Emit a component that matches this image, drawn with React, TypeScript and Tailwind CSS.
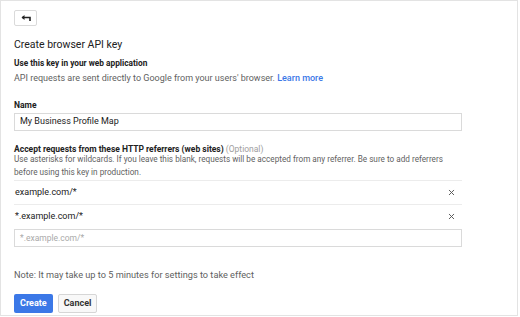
import { X } from "lucide-react";

const referrers = ["example.com/*", "*.example.com/*"];

function BackButton() {
  return (
    <button className="flex h-[16px] w-[23px] items-center justify-center rounded-[2px] border border-[#dadada] bg-white">
      <svg width="10" height="7" viewBox="0 0 10 7" fill="none">
        <path d="M1 2.5 L9 2.5 L9 6" stroke="#222" strokeWidth="1.6" />
        <path d="M0.5 2.5 L3.5 0 L3.5 5 Z" fill="#222" />
      </svg>
    </button>
  );
}

export default function App() {
  return (
    <div
      className="h-[317px] w-[520px] bg-white text-[#212121]"
      style={{ fontFamily: "Roboto, 'Liberation Sans', sans-serif" }}
    >
      <div className="h-[316px] w-[518px] border border-[#e3e3e3] pl-[13px] pt-[9px]">
        <BackButton />

        <h1 className="mt-[12px] text-[10.5px] leading-[14px]">Create browser API key</h1>

        <p className="mt-[5px] text-[8.3px] font-bold leading-[12px]">Use this key in your web application</p>
        <p className="mt-[3px] text-[9px] leading-[12px] text-[#5f5f5f]">
          API requests are sent directly to Google from your users' browser.{" "}
          <a className="font-medium text-[#3b78e7]">Learn more</a>
        </p>

        <p className="mt-[15px] text-[8.5px] font-bold leading-[12px]">Name</p>
        <div className="mt-[2px] flex h-[18px] w-[448px] items-center border border-[#dadada] px-[5px] text-[9px]">
          My Business Profile Map
        </div>

        <p className="mt-[12px] text-[8.5px] leading-[12px]">
          <span className="font-bold">Accept requests from these HTTP referrers (web sites)</span>{" "}
          <span className="text-[#9e9e9e]">(Optional)</span>
        </p>
        <p className="-mt-[2px] text-[8.2px] leading-[13px] text-[#5f5f5f]">
          Use asterisks for wildcards. If you leave this blank, requests will be accepted from any referrer. Be sure to add referrers
          <br />
          before using this key in production.
        </p>

        <div className="mt-[1px] w-[448px]">
          {referrers.map((r) => (
            <div
              key={r}
              className="flex h-[24px] items-center justify-between border-t border-[#ececec] pl-[1px] pr-[6px] text-[9px]"
            >
              <span>{r}</span>
              <X className="h-[9px] w-[9px] text-[#555]" strokeWidth={2.5} />
            </div>
          ))}
          <div className="mt-[1px] flex h-[18px] items-center border border-[#dadada] px-[5px] text-[8.5px] text-[#aaa]">
            *.example.com/*
          </div>
        </div>

        <p className="mt-[22px] text-[9.2px] leading-[12px] text-[#5f5f5f]">
          Note: It may take up to 5 minutes for settings to take effect
        </p>

        <div className="mt-[13px] flex gap-[5px]">
          <button className="h-[19px] rounded-[2px] bg-[#3b78e7] px-[6px] text-[9px] font-bold text-white">
            Create
          </button>
          <button className="h-[19px] rounded-[2px] border border-[#d6d6d6] bg-[#f8f8f8] px-[5px] text-[9px] font-bold text-[#333]">
            Cancel
          </button>
        </div>
      </div>
    </div>
  );
}
